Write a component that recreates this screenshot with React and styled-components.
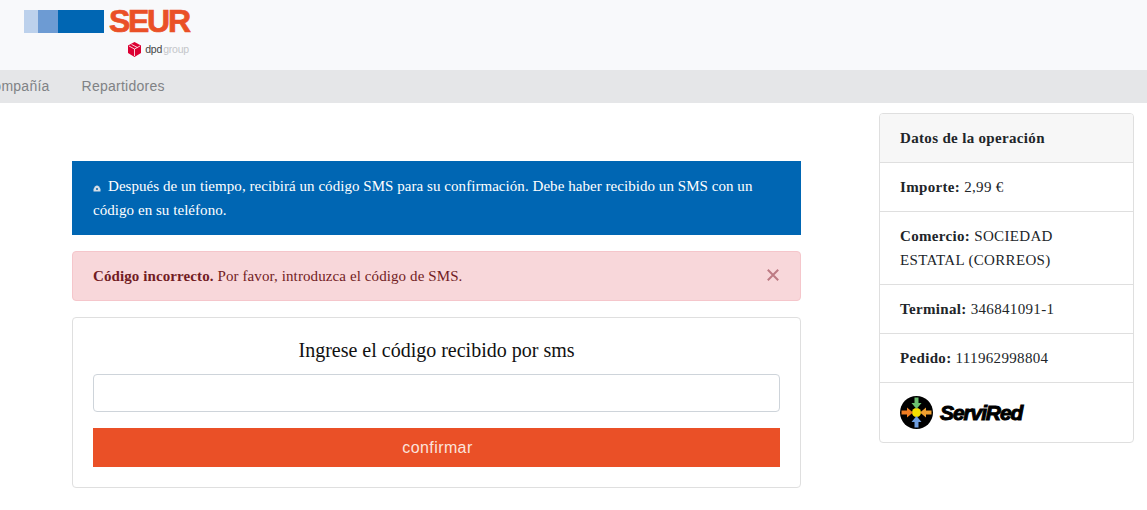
import React from "react";
import styled, { createGlobalStyle } from "styled-components";

const Global = createGlobalStyle`
  html, body { margin: 0; padding: 0; background: #fff; }
  body { font-family: "Liberation Serif", "Times New Roman", serif; font-size: 15px; line-height: 24px; color: #212529; width: 1147px; height: 510px; overflow: hidden; }
  * { box-sizing: border-box; }
`;

const Header = styled.header`
  height: 70px;
  background: #f8f9fb;
  padding: 10px 0 0 24px;
`;
const Logo = styled.div`
  width: 165px;
  display: flex;
  flex-direction: column;
  align-items: flex-end;
`;
const LogoTop = styled.div`
  display: flex;
  align-items: center;
  gap: 5px;
  height: 23px;
`;
const Blocks = styled.div`
  display: flex;
  height: 23px;
`;
const Block = styled.span`
  display: block;
  height: 23px;
  width: ${p => p.$w}px;
  background: ${p => p.$c};
`;
const Seur = styled.span`
  font-family: "Liberation Sans", Arial, sans-serif;
  font-weight: 700;
  font-size: 32px;
  line-height: 23px;
  letter-spacing: -2.3px;
  color: #ea5027;
  -webkit-text-stroke: 0.7px #ea5027;
  width: 80px;
  white-space: nowrap;
`;
const Dpd = styled.div`
  margin-top: 8px;
  display: flex;
  align-items: center;
  gap: 4px;
  height: 16px;
  font-family: "Liberation Sans", Arial, sans-serif;
  font-size: 10.5px;
  line-height: 16px;
  letter-spacing: -0.2px;
  color: #444;
`;
const Group = styled.span`
  color: #c4c6c9;
  margin-left: -3px;
`;

const Nav = styled.nav`
  height: 33px;
  padding-bottom: 2px;
  background: #e5e6e8;
  display: flex;
  align-items: center;
  gap: 32px;
  overflow: hidden;
`;
const NavItem = styled.a`
  font-family: "Liberation Sans", Arial, sans-serif;
  font-size: 14px;
  color: #808285;
  letter-spacing: 0.25px;
  white-space: nowrap;
  &:first-child { margin-left: -17px; }
`;

const Main = styled.main`
  display: flex;
  align-items: flex-start;
  padding: 10px 13px 0 72px;
  justify-content: space-between;
`;
const Left = styled.div`
  width: 729px;
  padding-top: 48px;
  display: flex;
  flex-direction: column;
  letter-spacing: 0.1px;
`;
const InfoBox = styled.div`
  background: #0066b3;
  color: #fff;
  padding: 13px 21px;
  margin-bottom: 16px;
  letter-spacing: 0.05px;
`;
const InfoIcon = styled.svg`
  width: 8px;
  height: 8px;
  margin-right: 7px;
  vertical-align: -1px;
`;
const ErrorBox = styled.div`
  background: #f8d7da;
  border: 1px solid #f5c6cb;
  border-radius: 4px;
  color: #721c24;
  padding: 12px 20px;
  margin-bottom: 16px;
  display: flex;
  justify-content: space-between;
  align-items: center;
`;
const CloseIcon = styled.svg`
  width: 12px;
  height: 12px;
  margin-right: 1px;
  margin-top: -3px;
`;
const FormCard = styled.div`
  background: #fff;
  border: 1px solid #dfdfdf;
  border-radius: 4px;
  padding: 20px;
  height: 171px;
  display: flex;
  flex-direction: column;
`;
const FormTitle = styled.h2`
  margin: 0 0 12px;
  font-weight: 400;
  font-size: 20px;
  line-height: 24px;
  letter-spacing: 0;
  text-align: center;
  color: #111;
`;
const CodeInput = styled.input`
  height: 38px;
  flex: none;
  border: 1px solid #ced4da;
  border-radius: 4px;
  background: #fff;
  margin-bottom: 16px;
  width: 100%;
`;
const Confirm = styled.button`
  height: 39px;
  flex: none;
  width: 100%;
  padding: 0 0 0 2px;
  border: 0;
  background: #ea5027;
  color: #fbe3dc;
  font-family: "Liberation Sans", Arial, sans-serif;
  font-size: 16px;
  font-weight: 400;
  letter-spacing: 0.4px;
`;

const Side = styled.aside`
  width: 255px;
  background: #fff;
  border: 1px solid #dfdfdf;
  border-radius: 4px;
  overflow: hidden;
  letter-spacing: 0.33px;
`;
const SideHead = styled.div`
  background: #f7f7f7;
  border-bottom: 1px solid #dfdfdf;
  padding: 12px 20px;
  font-weight: 700;
  height: 49px;
  color: #212529;
`;
const SideRow = styled.div`
  border-bottom: 1px solid #dfdfdf;
  padding: 12px 20px;
`;
const Brand = styled.div`
  display: flex;
  align-items: center;
  gap: 7px;
  height: 59px;
  padding: 0 20px;
`;
const BrandName = styled.span`
  font-family: "Liberation Sans", Arial, sans-serif;
  font-weight: 700;
  font-style: italic;
  font-size: 21px;
  letter-spacing: -1.1px;
  color: #000;
  -webkit-text-stroke: 1px #000;
`;

export default function App() {
  return (
    <>
      <Global />
      <Header>
        <Logo>
          <LogoTop>
            <Blocks>
              <Block $w={14} $c="#bcd1ec" />
              <Block $w={20} $c="#6d9bd3" />
              <Block $w={46} $c="#0066b3" />
            </Blocks>
            <Seur>SEUR</Seur>
          </LogoTop>
          <Dpd>
            <svg width="13" height="15" viewBox="0 0 13 15">
              <path d="M6.500 0L13 3.500V11L6.500 15L0 11V3.500Z" fill="#dc0032" />
              <path d="M1 4L6.500 7V14M12 4L6.500 7M3.500 2.400L9.500 5.600" fill="none" stroke="#fff" strokeWidth="0.8" />
            </svg>
            <span>dpd</span>
            <Group>group</Group>
          </Dpd>
        </Logo>
      </Header>
      <Nav>
        <NavItem>Compañía</NavItem>
        <NavItem>Repartidores</NavItem>
      </Nav>
      <Main>
        <Left>
          <InfoBox>
            <InfoIcon viewBox="0 0 8 8">
              <path d="M0.500 7.500V5L2 2.500Q4 0.500 6 2.500L7.500 5V7.500Z" fill="#d5dde6" />
              <circle cx="4" cy="5" r="1" fill="#0066b3" />
            </InfoIcon>
            Después de un tiempo, recibirá un código SMS para su confirmación. Debe haber recibido un SMS con un código en su teléfono.
          </InfoBox>
          <ErrorBox>
            <span><b>Código incorrecto.</b> Por favor, introduzca el código de SMS.</span>
            <CloseIcon viewBox="0 0 12 12">
              <path d="M0.800 0.800L11.200 11.200M11.200 0.800L0.800 11.200" stroke="#bd7a83" strokeWidth="2" fill="none" />
            </CloseIcon>
          </ErrorBox>
          <FormCard>
            <FormTitle>Ingrese el código recibido por sms</FormTitle>
            <CodeInput />
            <Confirm>confirmar</Confirm>
          </FormCard>
        </Left>
        <Side>
          <SideHead>Datos de la operación</SideHead>
          <SideRow><b>Importe:</b> 2,99 €</SideRow>
          <SideRow><b>Comercio:</b> SOCIEDAD ESTATAL (CORREOS)</SideRow>
          <SideRow><b>Terminal:</b> 346841091-1</SideRow>
          <SideRow><b>Pedido:</b> 111962998804</SideRow>
          <Brand>
            <svg width="33" height="33" viewBox="0 0 33 33">
              <circle cx="16.500" cy="16.500" r="16.500" fill="#000" />
              <circle cx="16.500" cy="16.500" r="4.500" fill="#f6e000" />
              <path d="M14.500 1.500h4v5.500h3l-5 6-5-6h3z" fill="#6cc070" />
              <path d="M14.500 31.500h4v-5.500h3l-5-6-5 6h3z" fill="#6f9fe0" />
              <path d="M1.500 14.500v4h5.500v3l6-5-6-5v3z" fill="#ef7d22" />
              <path d="M31.500 14.500v4h-5.500v3l-6-5 6-5v3z" fill="#f0a030" />
            </svg>
            <BrandName>ServiRed</BrandName>
          </Brand>
        </Side>
      </Main>
    </>
  );
}
